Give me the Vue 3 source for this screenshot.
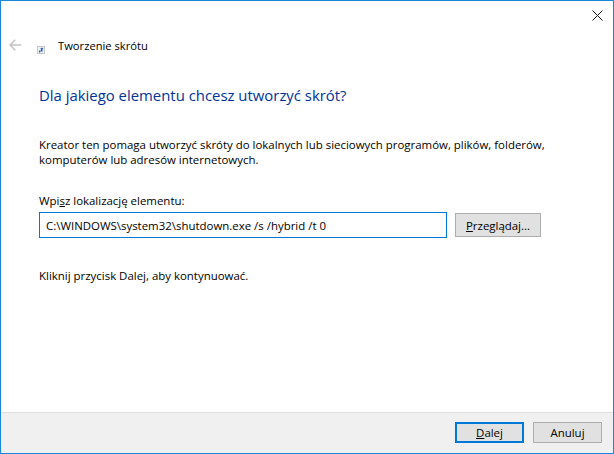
<script setup>
</script>

<template>
  <div class="window">
    <div class="close-row">
      <svg class="close" width="11" height="11" viewBox="0 0 11 11">
        <path d="M0.5 0.5L10.5 10.5M10.5 0.5L0.5 10.5" stroke="#1a1a1a" stroke-width="1" fill="none" />
      </svg>
    </div>
    <div class="nav">
      <svg class="back" width="13" height="12" viewBox="0 0 13 12">
        <path d="M6.2 0.8L1.2 6L6.2 11.2M1.2 6H12.5" stroke="#c4c4c4" stroke-width="1.6" fill="none" />
      </svg>
      <svg class="wizard" width="8" height="8" viewBox="0 0 8 8">
        <rect x="0.5" y="0.5" width="7" height="7" fill="#eef0f4" stroke="#c8c8c8" />
        <path d="M2 6.5V4.5H4V3H3L5 1.5L6.5 3H5.5V5.5H3V6.5Z" fill="#1f5fb4" />
      </svg>
      <span class="nav-title">Tworzenie skrótu</span>
    </div>
    <main class="content">
      <h1 class="heading">Dla jakiego elementu chcesz utworzyć skrót?</h1>
      <p class="intro">Kreator ten pomaga utworzyć skróty do lokalnych lub sieciowych programów, plików, folderów,<br />komputerów lub adresów internetowych.</p>
      <label class="field-label" for="loc">Wpi<u>s</u>z lokalizację elementu:</label>
      <div class="field-row">
        <input id="loc" class="location" type="text" value="C:\WINDOWS\system32\shutdown.exe /s /hybrid /t 0" />
        <button class="btn browse"><u>P</u>rzeglądaj...</button>
      </div>
      <p class="hint">Kliknij przycisk Dalej, aby kontynuować.</p>
    </main>
    <footer class="footer">
      <button class="btn primary"><u>D</u>alej</button>
      <button class="btn">Anuluj</button>
    </footer>
  </div>
</template>

<style>
html, body { margin: 0; padding: 0; background: #fff; }
</style>

<style scoped>
.window {
  box-sizing: border-box;
  width: 614px;
  height: 454px;
  border: 1px solid #1a86d9;
  background: #fff;
  display: flex;
  flex-direction: column;
  font-family: "Open Sans", "Noto Sans", sans-serif;
  font-size: 11.45px;
  color: #000;
  overflow: hidden;
}
.close-row {
  height: 29px;
  display: flex;
  justify-content: flex-end;
  padding: 9px 10px 0 0;
  box-sizing: border-box;
}
.nav {
  height: 30px;
  display: flex;
  align-items: center;
  padding-left: 8px;
}
.back { margin-right: 15px; }
.wizard { margin-top: 9px; margin-right: 13px; }
.nav-title { font-size: 11.2px; line-height: 30px; padding-top: 2px; }
.content {
  flex: 1;
  padding: 0 0 0 38px;
}
.heading {
  margin: 24px 0 0;
  font-size: 14.9px;
  font-weight: 400;
  line-height: 22px;
  color: #003399;
}
.intro {
  margin: 31px 0 0;
  line-height: 15px;
}
.field-label {
  display: block;
  margin-top: 26px;
  line-height: 15px;
}
.field-row {
  display: flex;
  align-items: center;
  margin-top: 4px;
}
.location {
  box-sizing: border-box;
  width: 408px;
  height: 26px;
  border: 1px solid #0078d7;
  padding: 0 6px;
  margin: 0;
  outline: none;
  font: inherit;
  color: #000;
}
.btn {
  box-sizing: border-box;
  width: 69px;
  height: 21px;
  margin: 0;
  padding: 0;
  border: 1px solid #adadad;
  background: #e1e1e1;
  font: inherit;
  color: #000;
}
.browse {
  width: 86px;
  height: 24px;
  margin-left: 8px;
}
.primary {
  border: 2px solid #0078d7;
}
.hint {
  margin: 30px 0 0;
  line-height: 15px;
}
.footer {
  height: 41px;
  box-sizing: border-box;
  background: #f0f0f0;
  border-top: 1px solid #dfdfdf;
  display: flex;
  justify-content: flex-end;
  align-items: flex-start;
  gap: 9px;
  padding: 9px 11px 0 0;
}
</style>
